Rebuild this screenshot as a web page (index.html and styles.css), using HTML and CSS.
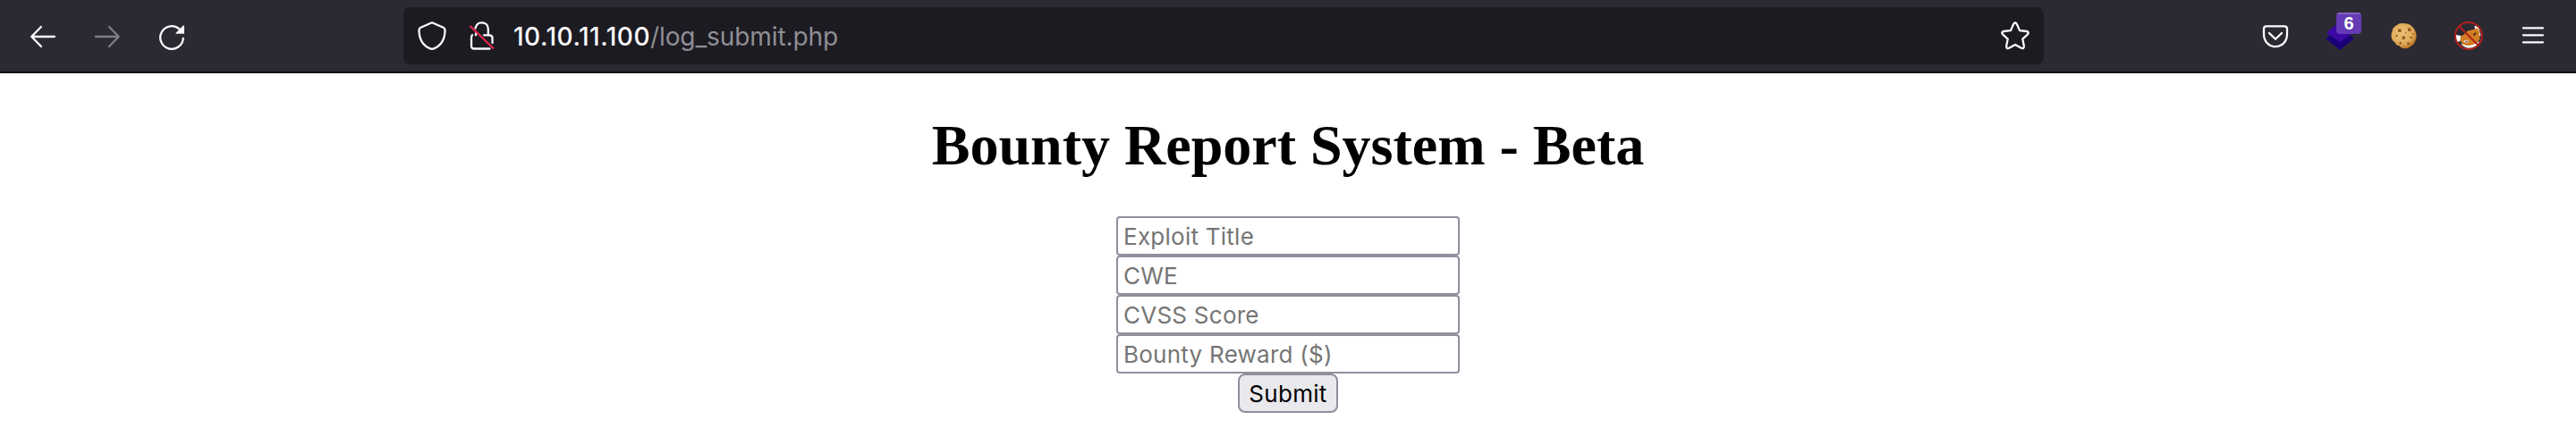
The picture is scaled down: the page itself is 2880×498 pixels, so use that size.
FILE: index.html
```html
<!DOCTYPE html>
<html lang="en">
<head>
<meta charset="utf-8">
<title>Bounty Report System - Beta</title>
<link rel="stylesheet" href="styles.css">
</head>
<body>
<header class="toolbar">
  <nav class="nav">
    <svg class="icon" viewBox="0 0 32 32"><path d="M29 16H3.500M14 5 3.300 16 14 27"/></svg>
    <svg class="icon disabled" viewBox="0 0 32 32"><path d="M3 16h25.500M18 5l10.700 11L18 27"/></svg>
    <svg class="icon" viewBox="0 0 32 32"><path d="M28.800 18A12.800 12.800 0 1 1 24 7"/><path class="solid" d="M30 4v8.800H21.200c-.8 0-1-.6-.5-1.100L28.600 3.800c.5-.5 1.400-.4 1.400.2z"/></svg>
  </nav>
  <div class="urlbar">
    <svg class="icon shield" viewBox="0 0 32 32"><path d="M16 1.300 28.500 6.700q2 .9 2 2.800C30.500 19 26.500 27 18 30.400q-2 .8-4 0C5.500 27 1.500 19 1.500 9.500q0-1.900 2-2.800z"/></svg>
    <svg class="icon lock" viewBox="0 0 32 32"><path d="M8.500 7.500C9.500 3.500 12 1.300 15.500 1.300c4.500 0 7.300 3 7.300 7.500v6.500h1.200q3.500 0 3.500 3.500V24M5 15.300q-1 .7-1 3.200v9q0 3 3 3h17.500"/><path d="M9 15.300v-2M18 15.300h5"/><path class="slash" d="M2.500 5 29 30.500"/></svg>
    <div class="url"><span class="host">10.10.11.100</span><span class="path">/log_submit.php</span></div>
    <svg class="icon star" viewBox="0 0 32 32"><path d="M14 3.300q2-3.600 4 0l3 6.800 7.500.9q3.800.8 1.300 3.600l-5.500 5 1.500 7.700q.3 3.800-3 2.500L16 26l-6.800 3.800q-3.300 1.300-3-2.500l1.500-7.700-5.500-5Q-.3 11.800 3.500 11l7.500-.9z"/></svg>
  </div>
  <div class="tools">
    <svg class="icon" viewBox="0 0 32 32"><path d="M6 5.300h20q3 0 3 3V14c0 8-5 14.200-13 14.200S3 22 3 14V8.300q0-3 3-3zM9 13l7 6.800 7-6.800"/></svg>
    <div class="extension">
      <svg class="icon" viewBox="0 0 32 32"><path fill="#1a0078" d="M16 7 32 19 16 32 0 19z"/><path fill="#3d08a2" d="M16 0 31 12.500 16 23 .8 12.500z"/></svg>
      <span class="badge">6</span>
    </div>
    <svg class="icon art" viewBox="0 0 32 32">
      <defs><radialGradient id="dough" cx=".42" cy=".4" r=".62"><stop offset=".3" stop-color="#e6ba70"/><stop offset=".75" stop-color="#dca550"/><stop offset="1" stop-color="#b66f22"/></radialGradient></defs>
      <path fill="url(#dough)" d="M6 5q2-1 4-2.500 3-.8 6-.2 4-.3 7 1.700l3 3q3 3 3.300 7 1 4-.6 7-1 4-4.700 6.500Q20 31 15 30q-3-.2-4.500-2.700Q7 27 5.500 23.500 2 21 1.600 17 1 14 2.500 11 3 7 6 5z"/>
      <g fill="#935c24"><path d="M9 8.500h3.500V12H9zM20 7.500h3.500V11H20zM13.500 16.500H17V20h-3.500zM6.500 15h2v2h-2zM22.500 17h2.500v2h-2.500zM19 23.500h3.500V26H19zM10.500 23H13v2.500h-2.500z"/><path fill="#c76a35" d="M17 12h1.500v1.500H17zM25 13h2v2h-2zM15 26h1.500v1.500H15z"/></g>
    </svg>
    <svg class="icon art" viewBox="0 0 32 32">
      <path fill="#fff" d="M22.500 5q3-.5 5 3l2 8-5 2zM1.500 15l6 1-1 6-3 1q-2.500-4-2-8zM7 25l8 1.500 8-1.500 5-3q-2 5-7 7-8 2.500-14-4z"/>
      <path fill="#d37d22" d="M7 17q5-3 8-6.500Q22 9 26 7.500l2 4q0 5 .500 8.500-3 4-7.500 6-6 2-11.500-.5Q6 23 7 17z"/>
      <path fill="#fff" d="m10 22 4-1.500 2 2-2.500 1.500z"/><path fill="#2b1710" d="m12 21.500 3 .5-1.500 1.500zM21 14.500l3-2 1 .5-3 3z"/>
      <circle class="ban" cx="16" cy="16" r="15"/><path class="ban" d="m5.500 5.500 21 21"/>
    </svg>
    <svg class="icon" viewBox="0 0 32 32"><path d="M5 7.300h22M5 15.300h22M5 23.300h22"/></svg>
  </div>
</header>
<main class="page">
  <h1 class="title">Bounty Report System - Beta</h1>
  <form class="report">
    <input class="field" type="text" placeholder="Exploit Title">
    <input class="field" type="text" placeholder="CWE">
    <input class="field" type="text" placeholder="CVSS Score">
    <input class="field" type="text" placeholder="Bounty Reward ($)">
    <button class="submit" type="button">Submit</button>
  </form>
</main>
</body>
</html>
```
FILE: styles.css
```css
* { box-sizing: border-box; }
body { margin: 0; background: #fff; font-family: Inter, "Liberation Sans", sans-serif; }
.toolbar { display: flex; height: 82px; padding-top: 8px; background: #2b2a33; border-bottom: 2px solid #0c0c0d; }
.nav { display: flex; gap: 40px; width: 451px; padding: 17px 0 0 32px; }
.icon { display: block; flex: none; width: 32px; height: 32px; fill: none; stroke: #fbfbfe; stroke-width: 2.3; stroke-linecap: round; stroke-linejoin: round; overflow: visible; }
.disabled { opacity: .4; }
.solid { fill: #fbfbfe; stroke: none; }
.slash { stroke: #e22850; stroke-linecap: butt; }
.urlbar { display: flex; width: 1834px; height: 64px; padding: 16px 16px 0; border-radius: 8px; background: #1c1b22; }
.lock { margin-left: 24px; }
.url { flex: 1; margin-left: 19px; font-size: 28px; line-height: 34px; height: 34px; white-space: nowrap; color: #8f8f95; }
.host { color: #fbfbfe; font-weight: 500; letter-spacing: .5px; }
.path { letter-spacing: -.1px; }
.tools { display: flex; gap: 40px; padding: 16px 0 0 243px; }
.extension { position: relative; }
.extension .icon, .art { stroke: none; }
.badge { position: absolute; left: 12px; top: -10px; width: 28px; height: 24px; border-radius: 4px; background: linear-gradient(#8562c4 0 2px, #643bb5 2px); color: #fff; font: bold 20px/25px "Liberation Sans", sans-serif; text-align: center; }
.icon .ban { fill: none; stroke: #b3211c; stroke-width: 2; }
.page { display: flex; flex-direction: column; align-items: center; padding-top: 44px; }
.title { margin: 0 0 42px; font: bold 64px/74px "Liberation Serif", serif; color: #000; }
.report { display: flex; flex-direction: column; align-items: center; }
.field { width: 384px; height: 44px; margin: 0; padding: 0 6px; border: 2px solid #8f8f9d; border-radius: 4px; background: #fff; font: 26px/40px Inter, sans-serif; letter-spacing: .25px; }
.field::placeholder { color: #757575; opacity: 1; }
.submit { width: 112px; height: 44px; padding: 1px 0 0; border: 2px solid #8f8f9d; border-radius: 8px; background: #e9e9ed; color: #000; font: 26px/40px Inter, sans-serif; letter-spacing: .3px; }
```
